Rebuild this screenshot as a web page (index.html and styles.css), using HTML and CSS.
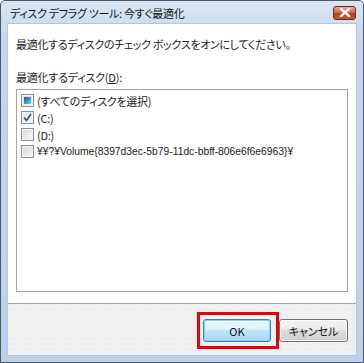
FILE: index.html
```html
<!DOCTYPE html>
<html lang="ja">
<head>
<meta charset="utf-8">
<link rel="stylesheet" href="styles.css">
</head>
<body>
<div class="window">
  <div class="titlebar">
    <span class="title">ディスク デフラグ ツール: 今すぐ最適化</span>
    <span class="close">
      <svg width="12" height="9" viewBox="0 0 12 9"><path d="M2 1 L10 8 M10 1 L2 8" stroke="#fff" stroke-width="2.4" stroke-linecap="square"/></svg>
    </span>
  </div>
  <div class="client">
    <div class="content">
      <p class="instruction">最適化するディスクのチェック ボックスをオンにしてください。</p>
      <p class="label">最適化するディスク(<u>D</u>):</p>
      <div class="listbox">
        <div class="row"><span class="cb cb-mixed"></span><span>(すべてのディスクを選択)</span></div>
        <div class="row"><span class="cb cb-checked"><svg width="9" height="9" viewBox="0 0 9 9"><path d="M1 4.5 L3.5 7.5 L8 1" fill="none" stroke="#2a4a9a" stroke-width="1.6"/></svg></span><span>(C:)</span></div>
        <div class="row"><span class="cb"></span><span>(D:)</span></div>
        <div class="row"><span class="cb"></span><span class="latin">¥¥?¥Volume{8397d3ec-5b79-11dc-bbff-806e6f6e6963}¥</span></div>
      </div>
    </div>
    <div class="footer">
      <button class="btn btn-default">OK<span class="highlight"></span></button>
      <button class="btn">キャンセル</button>
    </div>
  </div>
</div>
</body>
</html>
```

FILE: styles.css
```css
* { box-sizing: border-box; }
html, body { margin: 0; padding: 0; background: #fff; }
body {
  font-family: "Noto Sans CJK JP", "Noto Sans", sans-serif;
  font-size: 11px;
  color: #1a1a1a;
}
.window {
  width: 364px;
  height: 363px;
  border: 1px solid #4a5868;
  border-radius: 5px 5px 0 0;
  background: linear-gradient(#dbe6f3, #c3d6ed 40px, #bcd2ec);
  padding: 0 6px 6px 6px;
  display: flex;
  flex-direction: column;
}
.titlebar {
  height: 22px;
  display: flex;
  align-items: center;
  justify-content: space-between;
  padding: 0 1px 0 3px;
}
.title {
  font-size: 11px;
  font-feature-settings: "palt";
  color: #111;
  letter-spacing: -0.3px;
  margin-top: 1px;
}
.close {
  width: 23px;
  height: 14px;
  margin-top: 1px;
  border: 1px solid #6a2a1e;
  border-radius: 3px;
  background: linear-gradient(#e9a58f, #d06a4e 45%, #b93a1c 55%, #c8583a);
  display: flex;
  align-items: center;
  justify-content: center;
}
.client {
  flex: 1;
  display: flex;
  flex-direction: column;
  background: #fff;
  border: 1px solid #b3c6dc;
}
.content {
  flex: 1;
  padding: 13px 8px 0 8px;
  display: flex;
  flex-direction: column;
}
.instruction, .label {
  margin: 0;
  line-height: 14px;
  font-feature-settings: "palt";
  letter-spacing: -0.3px;
}
.label { margin-top: 19px; letter-spacing: -0.2px; }
.listbox {
  margin-top: 5px;
  height: 203px;
  border: 1px solid #a5a5a5;
  padding: 2px 4px;
  font-feature-settings: "palt";
}
.row {
  height: 17px;
  display: flex;
  align-items: center;
  gap: 3px;
  letter-spacing: -0.3px;
}
.latin {
  font-family: "Liberation Sans", "Noto Sans CJK JP", sans-serif;
  font-size: 10.3px;
  letter-spacing: 0;
}
.cb {
  width: 13px;
  height: 13px;
  border: 1px solid #8e8f8f;
  background: linear-gradient(135deg, #d8d8d8, #f6f6f6);
  box-shadow: inset 0 0 0 1px #f4f4f4;
  display: flex;
  align-items: center;
  justify-content: center;
  flex: none;
}
.cb-mixed::after {
  content: "";
  width: 7px;
  height: 7px;
  background: linear-gradient(135deg, #1f5f9c, #3ea3d6 60%, #86d3f0);
}
.cb-checked { background: linear-gradient(135deg, #e0e4ea, #f8f9fb); }
.footer {
  height: 52px;
  border-top: 1px solid #a3a3a3;
  background-color: #f0f0f0;
  background-image: radial-gradient(circle, #fdfdfd 0.7px, transparent 0.9px);
  background-size: 5px 5px;
  display: flex;
  justify-content: flex-end;
  align-items: flex-start;
  gap: 8px;
  padding: 15px 8px 0 0;
}
.btn {
  position: relative;
  height: 23px;
  font-family: "Noto Sans CJK JP", "Noto Sans", sans-serif;
  font-size: 11px;
  color: #111;
  border: 1px solid #707070;
  border-radius: 3px;
  background: linear-gradient(#f2f2f2, #ebebeb 50%, #dddddd 50%, #cfcfcf);
  box-shadow: inset 0 0 0 1px #fcfcfc;
  padding: 0;
  width: 69px;
  font-feature-settings: "palt";
}
.btn-default {
  width: 68px;
  border-color: #3c7fb1;
  background: linear-gradient(#eaf6fd, #d9f0fc 50%, #bee6fd 50%, #a7d9f5);
  box-shadow: inset 0 0 0 1px #8ed0f1;
}
.highlight {
  position: absolute;
  left: -7px;
  top: -8px;
  right: -9px;
  bottom: -8px;
  border: 3px solid #e8000b;
}
```
